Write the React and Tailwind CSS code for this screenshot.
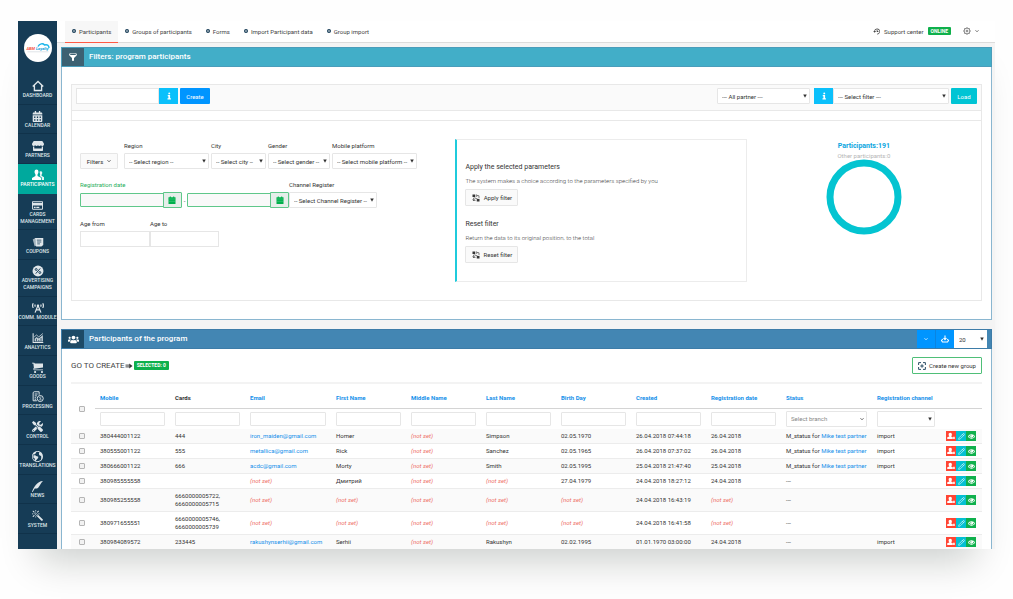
import React from "react";
import { ImEarth, ImQuill, ImMagicWand, ImFilter, ImEye, ImCart, ImHistory } from "react-icons/im";
import { FaBroadcastTower, FaTools, FaStore, FaRegCreditCard, FaCalendarAlt, FaUsers } from "react-icons/fa";
import { LuPencil } from "react-icons/lu";

/* ---------- icons ---------- */

const HomeIcon = () => (
  <svg viewBox="0 0 16 16" className="size-3" fill="none" stroke="currentColor" strokeWidth="1.8" aria-hidden="true">
    <path d="M1 8.6 8 2l7 6.6M3.2 7.4V14h9.6V7.4" />
  </svg>
);

const PeopleIcon = () => (
  <svg viewBox="0 0 16 16" className="size-3" fill="currentColor" aria-hidden="true">
    <ellipse cx="6" cy="4" rx="2.700" ry="3.300" />
    <path d="M4.600 6h2.800v3.200l4.600 2.300V14.500H0v-2.500l4.600-2.600z" />
    <path d="M10 3.800c.3-1.300 3.300-1.300 3.600.6.2 1.500-.3 2.500-.8 3.100v1.500l3.200 2v3.500h-3v-3.300L10.200 9.400c.5-.7.7-1.500.6-2.400z" opacity=".9" />
  </svg>
);

const CouponsIcon = () => (
  <svg viewBox="0 0 16 16" className="size-3" aria-hidden="true">
    <path d="M1 4.500 4 3l2 10-2.500.8z" fill="currentColor" opacity=".7" />
    <path d="M4 2.800h11v9.200l-2.500 2H5.500z" fill="currentColor" />
    <path d="M6.500 5.500h6M6.800 8h5.600M7 10.500h3.600" stroke="#163c56" strokeWidth="1" />
  </svg>
);

const PercentIcon = () => (
  <svg viewBox="0 0 16 16" className="size-3" aria-hidden="true">
    <circle cx="8" cy="8" r="7.300" fill="currentColor" />
    <g fill="none" stroke="#163c56" strokeWidth="1.300">
      <path d="M11 4.500 5 11.500" />
      <circle cx="5.600" cy="6" r="1.300" />
      <circle cx="10.400" cy="10" r="1.300" />
    </g>
  </svg>
);

const AnalyticsIcon = () => (
  <svg viewBox="0 0 16 16" className="size-3" aria-hidden="true">
    <path d="M1.500 1.500v12.500H15" fill="none" stroke="currentColor" strokeWidth="1.400" />
    <path d="M3.500 9 6 6.500l3 2 5.500-4.500v8.500h-11z" fill="currentColor" opacity=".85" />
    <path d="M3 6.500 6 4l3 2.500L14.500 2" fill="none" stroke="currentColor" />
    <path d="M6 9v3.500M9 10.500v2M12 8v4.500" stroke="#163c56" />
  </svg>
);

const ProcessingIcon = () => (
  <svg viewBox="0 0 16 16" className="size-3" fill="none" stroke="currentColor" strokeWidth="1.300" aria-hidden="true">
    <path d="M6.500 13H1.500V2l1.500-1h6.500v4M3.500 4h4M3.500 6.500h3M3.500 9h2M3.500 11h2" />
    <circle cx="11" cy="10" r="4" />
    <path d="M12.300 8.600c-.6-.7-2.300-.6-2.300.3 0 1.100 2.300.8 2.300 2 0 1-1.700 1.200-2.500.3" strokeWidth="1" />
  </svg>
);

const RingIcon = () => (
  <svg viewBox="0 0 8 8" className="size-1" aria-hidden="true">
    <circle cx="4" cy="4" r="2.800" fill="none" stroke="#163c56" strokeWidth="2.400" />
  </svg>
);

const Chevron = ({ className = "size-1" }) => (
  <svg viewBox="0 0 8 8" className={className} fill="none" stroke="currentColor" strokeWidth="1.500" aria-hidden="true">
    <path d="M1 2.500 4 5.500 7 2.500" />
  </svg>
);

const GearIcon = () => (
  <svg viewBox="0 0 16 16" className="size-2" fill="none" stroke="currentColor" strokeWidth="1.300" aria-hidden="true">
    <circle cx="8" cy="8" r="5.800" />
    <circle cx="8" cy="8" r="1.800" />
    <path d="M8 .6v1.600M8 13.800v1.600M.6 8h1.600M13.800 8h1.600M2.800 2.800l1.100 1.100M12.100 12.100l1.100 1.100M2.800 13.200l1.100-1.100M12.100 3.900l1.100-1.100" />
  </svg>
);

const InfoIcon = () => (
  <svg viewBox="0 0 16 16" className="size-2" fill="currentColor" aria-hidden="true">
    <circle cx="8.500" cy="2.800" r="1.900" />
    <path d="M5.500 6h4.700v6.500h1.600V15H5v-2.500h1.800v-4H5.500z" />
  </svg>
);

const CalendarSolid = () => (
  <svg viewBox="0 0 8 8" className="size-2" aria-hidden="true">
    <path d="M.5 1.200h1.300V.4h1v.8h2.400V.4h1v.8h1.300V8h-7z" fill="#00b04c" />
    <path d="M.5 3h7M1 5.300h6" stroke="#4fc983" strokeWidth=".6" />
  </svg>
);

const FilterToolIcon = () => (
  <svg viewBox="0 0 16 16" className="size-2" aria-hidden="true">
    <rect x="1" y="1" width="5.500" height="5" fill="currentColor" />
    <rect x="9.500" y="10" width="5.500" height="5" fill="currentColor" />
    <path d="M3 7.500v5.500h4M14 8.500V3.500L9 3M8 1l2.500 2.200L8 5.500M4 7.500l7 2" fill="none" stroke="currentColor" strokeWidth="1.200" />
    <path d="M1 10.500l2 3 3.500-4" fill="none" stroke="currentColor" strokeWidth="1" />
  </svg>
);

const GroupAddIcon = () => (
  <svg viewBox="0 0 16 16" className="size-2" fill="none" stroke="#163c56" strokeWidth="1.800" aria-hidden="true">
    <path d="M6 1.200H1.200V6M10 1.200h4.800V6M6 14.800H1.200V10M10 14.800h4.800V10M8 4.500v7M4.500 8h7" />
  </svg>
);

const ExportIcon = () => (
  <svg viewBox="0 0 16 16" className="size-2" fill="none" stroke="currentColor" strokeWidth="2.200" aria-hidden="true">
    <path d="M8 1v8M5 6l3 3.500L11 6" />
    <path d="M3.500 8 1 11l2 3h10l2-3-2.500-3" />
  </svg>
);

const UserMinusIcon = () => (
  <svg viewBox="0 0 16 16" className="size-2" fill="currentColor" aria-hidden="true">
    <path d="M3.200 5.200C3.200 3 4.600 1.600 6.500 1.600s3.300 1.400 3.300 3.600c0 1.800-.8 3-1.600 3.700l3.300 1.600V14H.5v-3.300l4.300-1.800c-.8-.7-1.600-1.900-1.600-3.700z" />
    <path d="M12.300 9.500h3.200V14h-3.200z" />
  </svg>
);

/* ---------- form parts ---------- */

function SelectBox({ id, label, options, className = "", chevron = false }) {
  return (
    <div className={"relative h-4 rounded-[1px] border border-[#e6e6e6] bg-white " + className}>
      <select
        id={id}
        aria-label={label}
        className={"block h-full w-full appearance-none bg-transparent pr-1 pl-1 text-[6px] outline-none " + (chevron ? "text-[#888]" : "text-[#333]")}
      >
        {options.map((o) => (
          <option key={o}>{o}</option>
        ))}
      </select>
      <span className="pointer-events-none absolute inset-y-0 right-[2px] flex items-center text-[#333]">
        {chevron ? (
          <Chevron />
        ) : (
          <svg viewBox="0 0 8 8" className="size-1" fill="currentColor" aria-hidden="true">
            <path d="M.5 1h7L4 7.500z" />
          </svg>
        )}
      </span>
    </div>
  );
}

function Field({ id, label, children, className = "" }) {
  return (
    <div className={"flex flex-col gap-[3px] " + className}>
      <label htmlFor={id} className="h-2 text-[6px] leading-2 whitespace-nowrap">
        {label}
      </label>
      {children}
    </div>
  );
}

function DateInput({ id, label }) {
  return (
    <div className="flex h-4 min-w-0 flex-1">
      <input id={id} aria-label={label} className="my-px min-w-0 flex-1 rounded-l-[1px] border border-[#5fc78a] bg-[#f9f9f9] px-1 text-[6px] outline-none" />
      <button type="button" aria-label="Open calendar" className="-ml-px flex w-[19px] shrink-0 items-center justify-center rounded-r-[1px] border border-[#5fc78a] bg-[#e6eeea]">
        <CalendarSolid />
      </button>
    </div>
  );
}

/* ---------- sidebar ---------- */

const MENU = [
  ["Dashboard", <HomeIcon />],
  ["Calendar", <FaCalendarAlt className="size-[11px]" />],
  ["Partners", <FaStore className="size-3" />],
  ["Participants", <PeopleIcon />],
  ["Cards management", <FaRegCreditCard className="size-[11px]" />],
  ["Coupons", <CouponsIcon />],
  ["Advertising campaigns", <PercentIcon />],
  ["Comm. module", <FaBroadcastTower className="size-3" />],
  ["Analytics", <AnalyticsIcon />],
  ["Goods", <ImCart className="size-[11px]" />],
  ["Processing", <ProcessingIcon />],
  ["Control", <FaTools className="size-[11px]" />],
  ["Translations", <ImEarth className="size-[11px]" />],
  ["News", <ImQuill className="size-[11px]" />],
  ["System", <ImMagicWand className="size-[11px]" />],
];
const WRAPPED = ["Cards management", "Advertising campaigns"];

function Sidebar() {
  return (
    <aside className="flex w-[39px] shrink-0 flex-col bg-[#163c56] text-[#dfe6ea]">
      <a href="#home" className="mx-auto my-[13px] flex size-7 items-center justify-center rounded-full bg-white" aria-label="ABM Loyalty">
        <svg viewBox="0 0 28 28" className="size-7" aria-hidden="true">
          <text x="2.500" y="16" fontFamily="Roboto, sans-serif" fontSize="4" fontWeight="700" fontStyle="italic" fill="#f4503c">ABM</text>
          <path d="M14 12.500c1.500-3 5-3.500 6.500-1.500 2.500-1 4.500.5 4.500 3" fill="none" stroke="#19b5ea" strokeWidth="1.400" />
          <text x="12" y="16" fontFamily="Roboto, sans-serif" fontSize="4" fontWeight="700" fontStyle="italic" fill="#0a9ad6">Loyalty</text>
          <path d="M3.500 17.800h21" stroke="#c9d2d8" strokeWidth=".6" />
        </svg>
      </a>
      <nav className="flex flex-1 flex-col pb-[15px]" aria-label="Main">
        {MENU.map(([label, icon]) => {
          const active = label === "Participants";
          return (
            <a
              key={label}
              href={"#" + label.toLowerCase().replace(/\W+/g, "-")}
              className={
                "flex grow flex-col items-center justify-center border-b pt-[5px] pb-1 text-center text-[5px] leading-[7px] font-medium uppercase " +
                (active ? "border-[#00a99d] bg-[#00a99d] text-white" : "border-[#10324a]")
              }
            >
              <span className="flex size-3 items-center justify-center">{icon}</span>
              <span className={WRAPPED.includes(label) ? "" : "whitespace-nowrap"}>{label}</span>
            </a>
          );
        })}
      </nav>
    </aside>
  );
}

/* ---------- top bar ---------- */

const TABS = ["Participants", "Groups of participants", "Forms", "Import Participant data", "Group import"];

function TopBar() {
  return (
    <header className="flex h-[22px] items-stretch border-b border-[#dcdcdc] bg-white pr-4 pl-2 text-[6px] text-[#444]">
      <nav className="flex" aria-label="Sections">
        {TABS.map((t, i) => (
          <a
            key={t}
            href={"#tab-" + i}
            className={
              "-mb-px flex items-center gap-[3px] border-b px-[7px] pb-px whitespace-nowrap " +
              (i === 0 ? "border-[#ff5a45] bg-[#f7f7f7]" : "border-transparent")
            }
          >
            <RingIcon />
            {t}
          </a>
        ))}
      </nav>
      <div className="ml-auto flex items-center gap-1 pb-px">
        <ImHistory className="size-[7px]" />
        <a href="#support">Support center</a>
        <span className="rounded-[1px] bg-[#0fb04c] px-[3px] text-[5px] leading-2 font-bold text-white">ONLINE</span>
        <button type="button" aria-label="Settings" className="ml-2 flex items-center gap-1">
          <GearIcon />
          <Chevron />
        </button>
      </div>
    </header>
  );
}

/* ---------- filters panel ---------- */

function InfoButton() {
  return (
    <button type="button" aria-label="Information" className="flex h-4 w-[19px] shrink-0 items-center justify-center bg-[#0bc0fb] text-white">
      <InfoIcon />
    </button>
  );
}

function FiltersPanel() {
  return (
    <section className="border border-[#8ab6d0] bg-white">
      <div className="-mx-px -mt-px flex h-5 items-stretch border border-[#4a9dbb] bg-[#42aec8] text-white">
        <span className="flex w-[22px] items-center justify-center bg-[#3c6172]">
          <ImFilter className="size-2" />
        </span>
        <h2 className="flex items-center pl-[5px] text-[8px] font-medium">Filters: program participants</h2>
      </div>

      <div className="mx-[9px] mt-[17px] mb-[18px] border border-[#e8e8e8]">
        <div className="flex h-[26px] items-start border-b border-[#e8e8e8] bg-[#fafafa] px-1 pt-[3px]">
          <input aria-label="Filter name" className="h-4 w-[83px] border border-[#e6e6e6] bg-white px-1 text-[6px] outline-none" />
          <InfoButton />
          <button type="button" className="ml-0.5 h-4 w-[30px] rounded-[1px] bg-[#0095ff] text-[6px] text-white">
            Create
          </button>
          <div className="ml-auto flex items-center">
            <SelectBox label="Partner" options={["--- All partner ---"]} className="w-[93px]" />
            <span className="ml-1 flex">
              <InfoButton />
            </span>
            <SelectBox label="Saved filter" options={["--- Select filter ---"]} className="w-[116px]" />
            <button type="button" className="ml-0.5 h-4 w-[26px] rounded-[1px] bg-[#00c4d4] text-[6px] text-white">
              Load
            </button>
          </div>
        </div>
        <div className="h-[10px] border-b border-[#e8e8e8]" />

        <div className="grid grid-cols-[383fr_291fr_234fr] pb-[18px]">
          <form className="flex flex-col gap-3 pt-[21px] pl-2" onSubmit={(e) => e.preventDefault()}>
            <div className="flex items-end gap-0.5">
              <button type="button" className="mr-1 flex h-4 w-[38px] items-center justify-center gap-1 rounded-[1px] border border-[#e6e6e6] bg-[#fafafa] text-[6px]">
                Filters
                <Chevron />
              </button>
              <Field id="region" label="Region">
                <SelectBox id="region" options={["-- Select region --"]} className="w-[85px]" />
              </Field>
              <Field id="city" label="City">
                <SelectBox id="city" options={["-- Select city --"]} className="w-[55px]" />
              </Field>
              <Field id="gender" label="Gender">
                <SelectBox id="gender" options={["-- Select gender --"]} className="w-[62px]" />
              </Field>
              <Field id="platform" label="Mobile platform">
                <SelectBox id="platform" options={["-- Select mobile platform --"]} className="w-[85px]" />
              </Field>
            </div>

            <div className="flex items-end">
              <Field id="date-from" label={<span className="text-[#1fae5b]">Registration date</span>} className="w-[209px]">
                <div className="flex items-center gap-[2px] text-[6px]">
                  <DateInput id="date-from" />
                  <span>-</span>
                  <DateInput id="date-to" label="Registration date to" />
                </div>
              </Field>
              <Field id="channel" label="Channel Register">
                <SelectBox id="channel" options={["-- Select Channel Register --"]} className="w-[88px]" />
              </Field>
            </div>

            <div className="flex">
              <Field id="age-from" label="Age from">
                <input id="age-from" className="h-4 w-[70px] border border-[#e6e6e6] px-1 text-[6px] outline-none" />
              </Field>
              <Field id="age-to" label="Age to">
                <input id="age-to" className="h-4 w-[69px] border border-[#e6e6e6] px-1 text-[6px] outline-none" />
              </Field>
            </div>
          </form>

          <div className="mt-[18px] border border-l-2 border-[#ececec] border-l-[#1fcbdc] pt-[22px] pb-[18px] pl-2">
            <h3 className="text-[7px] leading-[10px]">Apply the selected parameters</h3>
            <p className="mt-[5px] text-[6px] leading-2 font-light text-[#444]">The system makes a choice according to the parameters specified by you</p>
            <button type="button" className="mt-1 flex h-[17px] w-[53px] items-center justify-center gap-1 rounded-[1px] border border-[#e6e6e6] bg-[#fafafa] text-[6px]">
              <FilterToolIcon />
              Apply filter
            </button>
            <h3 className="mt-[13px] text-[7px] leading-[10px]">Reset filter</h3>
            <p className="mt-[5px] text-[6px] leading-2 font-light text-[#444]">Return the data to its original position, to the total</p>
            <button type="button" className="mt-1 flex h-[17px] w-[53px] items-center justify-center gap-1 rounded-[1px] border border-[#e6e6e6] bg-[#fafafa] text-[6px]">
              <FilterToolIcon />
              Reset filter
            </button>
          </div>

          <div className="flex flex-col items-center pt-5 text-center">
            <strong className="text-[7px] leading-[10px] font-bold text-[#0aa5e0]">Participants:191</strong>
            <span className="text-[6px] leading-[9px] text-[#b5b5b5]">Other participants:0</span>
            <svg viewBox="0 0 76 76" className="-mt-px size-[76px]" role="img" aria-label="Participants chart">
              <circle cx="38" cy="38" r="34" fill="none" stroke="#04c4d1" strokeWidth="7" />
            </svg>
          </div>
        </div>
      </div>
    </section>
  );
}

/* ---------- participants panel ---------- */

const COLUMNS = ["Mobile", "Cards", "Email", "First Name", "Middle Name", "Last Name", "Birth Day", "Created", "Registration date", "Status", "Registration channel"];

const ROWS = [
  ["380444001122", "444", "iron_maiden@gmail.com", "Homer", null, "Simpson", "02.05.1970", "26.04.2018 07:44:18", "26.04.2018", true, "import"],
  ["380555001122", "555", "metallica@gmail.com", "Rick", null, "Sanchez", "02.05.1965", "26.04.2018 07:37:02", "26.04.2018", true, "import"],
  ["380666001122", "666", "acdc@gmail.com", "Morty", null, "Smith", "02.05.1995", "25.04.2018 21:47:40", "25.04.2018", true, "import"],
  ["380985555558", "", null, "Дмитрий", null, null, "27.04.1979", "24.04.2018 18:27:12", "24.04.2018", false, ""],
  ["380985255558", "6660000005722, 6660000005715", null, null, null, null, null, "24.04.2018 16:43:19", null, false, ""],
  ["380971655551", "6660000005746, 6660000005739", null, null, null, null, null, "24.04.2018 16:41:58", null, false, ""],
  ["380984089572", "233445", "rakushynserhii@gmail.com", "Serhii", null, "Rakushyn", "02.02.1995", "01.01.1970 03:00:00", "24.04.2018", false, "import"],
];

function Cell({ value, column }) {
  if (value === null) return <em className="text-[#ee6e66]">(not set)</em>;
  if (column === 2) return <a href={"mailto:" + value} className="text-[#1590ea]">{value}</a>;
  if (column === 9) {
    return value ? (
      <>
        M_status for <a href="#partner" className="text-[#1590ea]">Mike test partner</a>
      </>
    ) : (
      "---"
    );
  }
  return value;
}

function ParticipantsTable() {
  return (
    <table className="w-full table-fixed border-collapse text-left text-[6px] leading-2">
      <colgroup>
        <col className="w-[24px]" />
        <col className="w-[75px]" />
        <col className="w-[75px]" />
        <col className="w-[86px]" />
        <col className="w-[75px]" />
        <col className="w-[75px]" />
        <col className="w-[75px]" />
        <col className="w-[75px]" />
        <col className="w-[75px]" />
        <col className="w-[75px]" />
        <col className="w-[91px]" />
        <col className="w-[68px]" />
        <col className="w-[42px]" />
      </colgroup>
      <thead>
        <tr className="h-6">
          <th rowSpan={2} className="pt-1 pl-2 align-middle">
            <input type="checkbox" aria-label="Select all" className="block size-[6px] appearance-none rounded-[1px] border border-[#b5b5b5] bg-[#f2f2f2]" />
          </th>
          {COLUMNS.map((c) => (
            <th key={c} className="border-b border-[#d4d4d4] px-[5px] pt-1 align-middle font-bold whitespace-nowrap">
              {c === "Cards" ? c : <a href={"#sort-" + c.toLowerCase().replace(" ", "-")} className="text-[#1590ea]">{c}</a>}
            </th>
          ))}
          <th className="border-b border-[#d4d4d4]" aria-label="Actions" />
        </tr>
        <tr className="h-[21px]">
          {COLUMNS.map((c, i) => (
            <td key={c} className="px-[5px]">
              {i === 9 ? (
                <SelectBox label="Filter by status" options={["Select branch"]} chevron />
              ) : i === 10 ? (
                <SelectBox label="Filter by registration channel" options={[""]} />
              ) : (
                <input aria-label={"Filter by " + c} className="block h-[14px] w-full rounded-[1px] border border-[#e6e6e6] bg-white px-1 outline-none" />
              )}
            </td>
          ))}
          <td />
        </tr>
      </thead>
      <tbody>
        {ROWS.map((r) => (
          <tr key={r[0]} className="border-b border-[#ececec] last:border-b-0 odd:bg-[#fafafa]">
            <td className="pl-2">
              <input type="checkbox" aria-label={"Select " + r[0]} className="block size-[6px] appearance-none rounded-[1px] border border-[#b5b5b5] bg-[#f2f2f2]" />
            </td>
            {r.map((v, i) => (
              <td key={i} className={"px-[5px] py-[3px] " + (i === 1 ? "" : "whitespace-nowrap")}>
                <Cell value={v} column={i} />
              </td>
            ))}
            <td className="pl-[6px]">
              <div className="flex text-white">
                <button type="button" aria-label="Remove" className="flex h-[10px] w-[10px] items-center justify-center bg-[#ff4433]">
                  <UserMinusIcon />
                </button>
                <button type="button" aria-label="Edit" className="flex h-[10px] w-[10px] items-center justify-center bg-[#04bfd2]">
                  <LuPencil className="size-[7px]" />
                </button>
                <button type="button" aria-label="View" className="flex h-[10px] w-[10px] items-center justify-center bg-[#0fb04c]">
                  <ImEye className="size-[7px]" />
                </button>
              </div>
            </td>
          </tr>
        ))}
      </tbody>
    </table>
  );
}

function ParticipantsPanel() {
  return (
    <section className="border border-b-0 border-[#8ab6d0] bg-white">
      <div className="-mx-px -mt-px flex h-5 items-stretch border border-[#3d7ca8] bg-[#4386b3] text-white">
        <span className="flex w-[22px] items-center justify-center bg-[#1d4a66]">
          <FaUsers className="size-[11px]" />
        </span>
        <h2 className="flex items-center pl-[5px] text-[8px] font-medium">Participants of the program</h2>
        <div className="mr-1 ml-auto flex">
          <button type="button" aria-label="Collapse" className="flex w-[19px] items-center justify-center border-r border-[#0a84e0] bg-[#0095ff]">
            <Chevron />
          </button>
          <button type="button" aria-label="Export" className="flex w-[18px] items-center justify-center bg-[#0095ff]">
            <ExportIcon />
          </button>
          <div className="flex w-[33px] items-center bg-white">
            <SelectBox label="Rows per page" options={["20", "50", "100"]} className="flex-1 border-white" />
          </div>
        </div>
      </div>

      <div className="mx-[9px] mt-2">
        <div className="flex items-center border-b-2 border-[#f3f3f3] pb-2">
          <span className="text-[8px] leading-[10px] text-[#444]">GO TO CREATE</span>
          <svg viewBox="0 0 16 16" className="mr-px size-2" fill="none" stroke="#333" strokeWidth="1.800" aria-hidden="true">
            <path d="M1 6.200h8M1 9.800h8" />
            <path d="M8.500 3v10L15 8z" fill="#333" stroke="none" />
          </svg>
          <span className="rounded-[1px] bg-[#0fb04c] px-[3px] text-[5px] leading-[9px] font-bold text-white">SELECTED: 0</span>
          <button type="button" className="ml-auto flex h-[17px] items-center gap-[3px] rounded-[1px] border border-[#4fbf78] bg-white px-[5px] text-[6px]">
            <GroupAddIcon />
            Create new group
          </button>
        </div>
        <ParticipantsTable />
      </div>
    </section>
  );
}

export default function App() {
  return (
    <div className="min-h-screen bg-[#fefefe] px-[18px] pt-[21px] pb-12 font-[Roboto,'Liberation_Sans',sans-serif] text-[#333]">
      <div className="flex shadow-[0_32px_36px_-20px_rgba(0,20,10,0.20)]">
        <Sidebar />
        <div className="flex min-w-0 flex-1 flex-col bg-[#f4f4f4]">
          <TopBar />
          <main className="flex flex-col gap-[9px] pt-1 pr-[3px] pl-1">
            <FiltersPanel />
            <ParticipantsPanel />
          </main>
        </div>
      </div>
    </div>
  );
}
